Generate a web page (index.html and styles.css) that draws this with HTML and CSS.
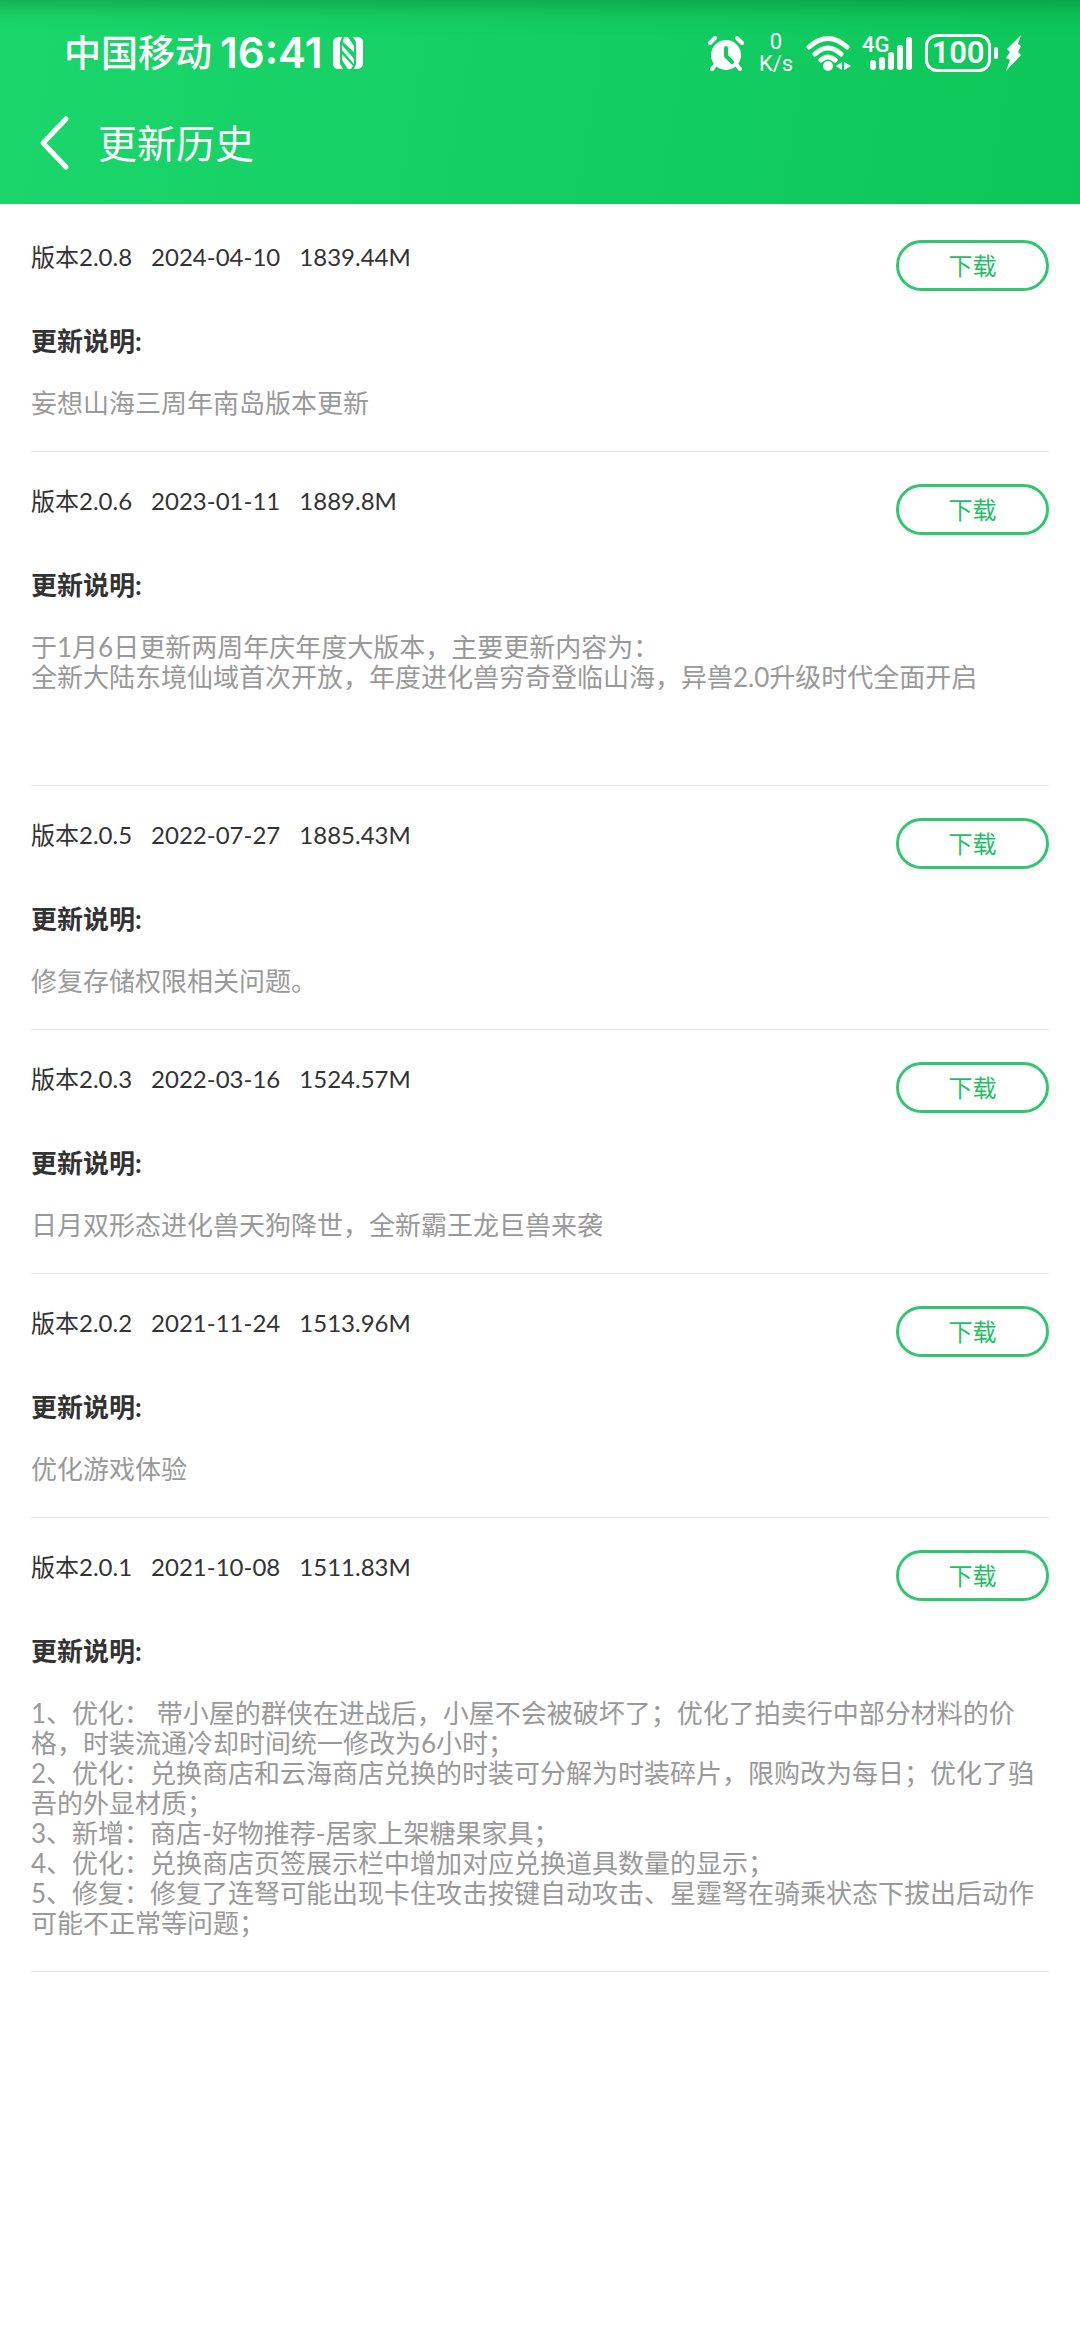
FILE: index.html
```html
<!DOCTYPE html>
<html lang="zh-CN">
<head>
    <meta charset="UTF-8">
    <meta name="viewport" content="width=device-width, initial-scale=1.0">
    <title>更新历史</title>
    <link rel="stylesheet" href="styles.css">
</head>
<body>

    <header class="top">
        <div class="status">
            <span class="carrier">中国移动</span>
            <span class="time">16:41</span>
            <svg class="nfc" width="32" height="34" viewBox="0 0 32 34">
                <path fill="#fff" d="M8 1h2L8 6v22l3 5H7c-4 0-6-2-6-6V7c0-4 3-6 7-6zM24 33h-2l2-5V6l-3-5h4c4 0 6 2 6 6v20c0 4-3 6-7 6z"/>
                <path fill="#fff" d="M12 1h4l6 9v6L11 6zM10 9l12 14v5L10 14zM10 18l11 12-2 3h-3l-6-9z"/>
            </svg>

            <div class="status-right">
                <svg class="alarm" width="36" height="36" viewBox="0 0 36 36">
                    <circle cx="18" cy="20" r="15" fill="#fff"/>
                    <g stroke="#fff" stroke-width="4" stroke-linecap="round">
                        <path d="M2 8l5-5M34 8l-5-5M8 29l-4 5M28 29l4 5"/>
                    </g>
                    <path d="M18 13v8l6 6" fill="none" stroke="#12cb60" stroke-width="4" stroke-linejoin="round" stroke-linecap="round"/>
                </svg>
                <div class="speed"><span>0</span><span>K/s</span></div>
                <svg class="wifi" width="46" height="36" viewBox="0 0 46 36">
                    <g fill="none" stroke="#fff" stroke-width="5" stroke-linecap="round">
                        <path d="M3 12q19-17 38 0M9 19q13-12 26 0M15 25q7-6 14 0"/>
                    </g>
                    <circle cx="22" cy="31" r="5" fill="#fff"/>
                    <path d="M36 27v8l-6-4zM38 27v8l7-4z" fill="#fff"/>
                </svg>
                <div class="signal">
                    <span class="net">4G</span>
                    <svg width="43" height="36" viewBox="0 0 43 36">
                        <g stroke="#fff" stroke-width="6" stroke-linecap="round">
                            <path d="M3 28v4M12 25v7M21 20v12M30 13v19M39 5v27"/>
                        </g>
                    </svg>
                </div>
                <div class="battery">100</div>
                <svg class="bolt" width="17" height="38" viewBox="0 0 17 38">
                    <path d="M16 1L2 15l3 3-4 6 4 2-4 11 15-16-3-3 3-6-3-2z" fill="#fff"/>
                </svg>
            </div>
        </div>

        <div class="bar">
            <button class="back" aria-label="返回">
                <svg width="34" height="58" viewBox="0 0 34 58">
                    <path d="M28 5L5 29l23 24" fill="none" stroke="#fff" stroke-width="5" stroke-linecap="round" stroke-linejoin="round"/>
                </svg>
            </button>
            <h1>更新历史</h1>
        </div>
    </header>

    <main class="list">
        <section class="item">
            <div class="head">
                <p class="version"><span>版本2.0.8</span><span>2024-04-10</span><span>1839.44M</span></p>
                <button class="download">下载</button>
            </div>
            <h2>更新说明:</h2>
            <p class="desc">妄想山海三周年南岛版本更新</p>
        </section>

        <section class="item">
            <div class="head">
                <p class="version"><span>版本2.0.6</span><span>2023-01-11</span><span>1889.8M</span></p>
                <button class="download">下载</button>
            </div>
            <h2>更新说明:</h2>
            <p class="desc">于1月6日更新两周年庆年度大版本，主要更新内容为：<br>全新大陆东境仙域首次开放，年度进化兽穷奇登临山海，异兽2.0升级时代全面开启<br><br><br></p>
        </section>

        <section class="item">
            <div class="head">
                <p class="version"><span>版本2.0.5</span><span>2022-07-27</span><span>1885.43M</span></p>
                <button class="download">下载</button>
            </div>
            <h2>更新说明:</h2>
            <p class="desc">修复存储权限相关问题。</p>
        </section>

        <section class="item">
            <div class="head">
                <p class="version"><span>版本2.0.3</span><span>2022-03-16</span><span>1524.57M</span></p>
                <button class="download">下载</button>
            </div>
            <h2>更新说明:</h2>
            <p class="desc">日月双形态进化兽天狗降世，全新霸王龙巨兽来袭</p>
        </section>

        <section class="item">
            <div class="head">
                <p class="version"><span>版本2.0.2</span><span>2021-11-24</span><span>1513.96M</span></p>
                <button class="download">下载</button>
            </div>
            <h2>更新说明:</h2>
            <p class="desc">优化游戏体验</p>
        </section>

        <section class="item">
            <div class="head">
                <p class="version"><span>版本2.0.1</span><span>2021-10-08</span><span>1511.83M</span></p>
                <button class="download">下载</button>
            </div>
            <h2>更新说明:</h2>
            <p class="desc">1、优化： 带小屋的群侠在进战后，小屋不会被破坏了；优化了拍卖行中部分材料的价格，时装流通冷却时间统一修改为6小时；<br>2、优化：兑换商店和云海商店兑换的时装可分解为时装碎片，限购改为每日；优化了驺吾的外显材质；<br>3、新增：商店-好物推荐-居家上架糖果家具；<br>4、优化：兑换商店页签展示栏中增加对应兑换道具数量的显示；<br>5、修复：修复了连弩可能出现卡住攻击按键自动攻击、星霆弩在骑乘状态下拔出后动作可能不正常等问题；</p>
        </section>
    </main>

</body>
</html>
```
FILE: styles.css
```css
* {
    box-sizing: border-box;
}
body {
    margin: 0;
    background-color: #fff;
    color: #333;
    font-family: Lato, "Noto Sans CJK SC", sans-serif;
}
h1, h2, p {
    margin: 0;
}
button {
    padding: 0;
    background: none;
    border: none;
    font-family: inherit;
    cursor: pointer;
}
svg {
    display: block;
    flex: none;
}

/* header */
.top {
    background-image:
        linear-gradient(rgba(0, 70, 30, 0.25), rgba(0, 70, 30, 0.06) 16px, rgba(0, 70, 30, 0) 36px),
        linear-gradient(100deg, #1bd76b, #0cc65a);
    color: #fff;
}
.status {
    display: flex;
    align-items: center;
    height: 82px;
    padding: 24px 58px 0 64px;
}
.carrier {
    font-size: 37px;
    font-weight: 500;
    line-height: 40px;
}
.time {
    margin-left: 8px;
    font-family: Inter, sans-serif;
    font-size: 42px;
    font-weight: 600;
    line-height: 40px;
}
.nfc {
    margin-left: 10px;
}
.status-right {
    display: flex;
    align-items: center;
    margin-left: auto;
    font-family: Roboto, sans-serif;
}
.speed {
    display: flex;
    flex-direction: column;
    align-items: center;
    width: 36px;
    margin-left: 14px;
    font-size: 22px;
    line-height: 22px;
}
.wifi {
    margin-left: 12px;
}
.signal {
    position: relative;
    margin-left: 18px;
}
.net {
    position: absolute;
    top: 0;
    left: -8px;
    font-size: 22px;
    font-weight: 500;
    line-height: 20px;
}
.battery {
    position: relative;
    width: 66px;
    height: 38px;
    margin-left: 12px;
    border: 3px solid #fff;
    border-radius: 12px;
    font-size: 31px;
    font-weight: 600;
    line-height: 32px;
    text-align: center;
}
.battery::after {
    content: "";
    position: absolute;
    top: 10px;
    right: -10px;
    width: 4px;
    height: 12px;
    border-radius: 2px;
    background-color: #fff;
}
.bolt {
    margin-left: 14px;
}
.bar {
    display: flex;
    align-items: center;
    height: 122px;
    padding-left: 38px;
}
h1 {
    margin-left: 26px;
    font-size: 39px;
    font-weight: 400;
    line-height: 56px;
}

/* version list */
.list {
    padding: 4px 31px 0;
}
.item {
    padding: 32px 0 33px;
    border-bottom: 1px solid #e4e4e4;
}
.head {
    display: flex;
    align-items: flex-start;
    justify-content: space-between;
}
.version {
    display: flex;
    gap: 19px;
    font-size: 24px;
    line-height: 34px;
}
.download {
    width: 153px;
    height: 51px;
    border: 3px solid #32c672;
    border-radius: 26px;
    color: #22c064;
    font-size: 24px;
    line-height: 34px;
}
h2 {
    margin-top: 35px;
    font-size: 26px;
    font-weight: 700;
    line-height: 30px;
}
.desc {
    margin-top: 32px;
    color: #999;
    font-size: 26px;
    line-height: 30px;
}
```
